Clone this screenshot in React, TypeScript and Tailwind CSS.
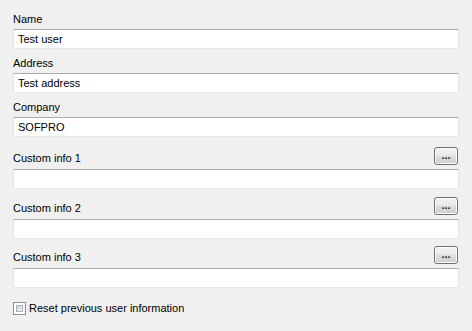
import React from 'react'

function TextBox({ value }: { value?: string }) {
  return (
    <div className="h-[20px] w-full bg-white border border-t-[#abadb3] border-x-[#e2e3ea] border-b-[#e3e9ef] flex items-center px-[4px] text-[11px] text-black">
      {value}
    </div>
  )
}

function Field({ label, value, first }: { label: string; value: string; first?: boolean }) {
  return (
    <div className={first ? '' : 'mt-[6px]'}>
      <div className="h-[16px] leading-[16px] mb-[2px]">{label}</div>
      <TextBox value={value} />
    </div>
  )
}

function DotsButton() {
  return (
    <button className="w-[24px] h-[18px] mr-[1px] rounded-[3px] border border-[#707070] bg-[linear-gradient(#f2f2f2_0%,#ebebeb_45%,#dddddd_50%,#cfcfcf_100%)] shadow-[inset_0_0_0_1px_#fcfcfc] flex items-end justify-center pb-[3px] text-[11px] font-bold leading-none text-[#1a1a4a]">
      ...
    </button>
  )
}

function CustomField({ label, gap }: { label: string; gap: string }) {
  return (
    <div className={gap}>
      <div className="flex items-end justify-between h-[18px] mb-[4px]">
        <span className="leading-[13px]">{label}</span>
        <DotsButton />
      </div>
      <TextBox />
    </div>
  )
}

export default function App() {
  return (
    <div
      className="w-[472px] h-[331px] bg-[#f0f0f0] px-[13px] pt-[11px] text-[11px] text-black"
      style={{ fontFamily: '"Liberation Sans", Arial, sans-serif' }}
    >
      <div className="w-[446px]">
        <Field label="Name" value="Test user" first />
        <Field label="Address" value="Test address" />
        <Field label="Company" value="SOFPRO" />
        <CustomField label="Custom info 1" gap="mt-[10px]" />
        <CustomField label="Custom info 2" gap="mt-[8px]" />
        <CustomField label="Custom info 3" gap="mt-[7px]" />
        <label className="mt-[12px] flex items-center gap-[3px]">
          <span className="w-[13px] h-[13px] border border-[#8f8f8f] bg-white p-[2px]">
            <span className="block w-full h-full border border-[#aeb3b9] bg-[linear-gradient(135deg,#cbcfd5,#f6f6f6)]" />
          </span>
          <span>Reset previous user information</span>
        </label>
      </div>
    </div>
  )
}
